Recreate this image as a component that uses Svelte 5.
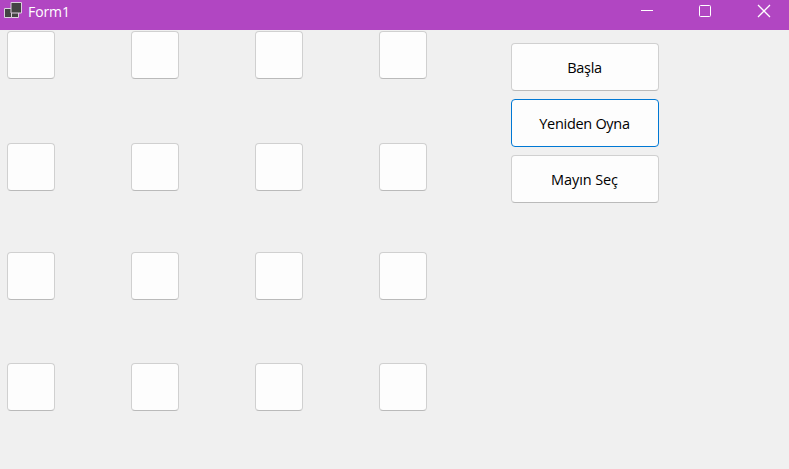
<script>
  const rows = [0, 1, 2, 3];
  const columns = [0, 1, 2, 3];
  const actions = [
    { label: 'Başla', kind: 'start' },
    { label: 'Yeniden Oyna', kind: 'restart', focused: true },
    { label: 'Mayın Seç', kind: 'mines' }
  ];
</script>

<div class="window">
  <header>
    <svg class="app-icon" width="22" height="22" viewBox="0 0 22 22">
      <path d="M11.500 12.500h7v5h-7z" />
      <path d="M4.500 8.500h7v9h-7z" />
      <path d="M11 2.500h10.500v10.500H11z" />
    </svg>
    <span class="title">Form1</span>
    <div class="controls">
      <svg width="14" height="14" viewBox="0 0 14 14"><path d="M1 6.500h12" /></svg>
      <svg width="14" height="14" viewBox="0 0 14 14"><rect x="1.500" y="1.500" width="11" height="11" rx="1" /></svg>
      <svg width="14" height="14" viewBox="0 0 14 14"><path class="close" d="M1 1l12 12M13 1L1 13" /></svg>
    </div>
  </header>
  <main>
    <div class="board">
      {#each rows as row}
        {#each columns as column}
          <button class="cell" aria-label={`${row + 1}, ${column + 1}`}></button>
        {/each}
      {/each}
    </div>
    <div class="actions">
      {#each actions as action}
        <button class={action.kind} class:focused={action.focused}><span>{action.label}</span></button>
      {/each}
    </div>
  </main>
</div>

<style>
  .window {
    width: 789px;
    height: 469px;
    overflow: hidden;
    background: #f0f0f0;
    font-family: "Open Sans", "Noto Sans", sans-serif;
  }
  header {
    display: flex;
    height: 30px;
    background: #b146c2;
    color: #fff;
  }
  .app-icon {
    flex: none;
    fill: #444;
    stroke: #dccfdf;
  }
  .title {
    margin-left: 6px;
    font-size: 14px;
    line-height: 24px;
    letter-spacing: -0.1px;
  }
  .controls {
    display: flex;
    gap: 44px 44px;
    margin: 4px 18px 0 auto;
    height: 14px;
  }
  .controls svg {
    fill: none;
    stroke: #fff;
    stroke-width: 1;
  }
  .controls svg:first-child {
    margin-right: 0;
  }
  .controls svg:last-child {
    margin-left: 1px;
  }
  .controls .close {
    stroke-width: 1.25;
  }
  main {
    display: flex;
    align-items: flex-start;
  }
  .board {
    display: grid;
    grid-template-columns: repeat(4, 48px);
    grid-template-rows: 112px 109px 111px 48px;
    column-gap: 76px;
    padding: 1px 0 0 7px;
  }
  button {
    box-sizing: border-box;
    height: 48px;
    margin: 0;
    padding: 0;
    border: 1px solid #d0d0d0;
    border-bottom-color: #bababa;
    border-radius: 4px;
    background: #fdfdfd;
    color: #000;
    font: 14.500px/20px "Open Sans", "Noto Sans", sans-serif;
  }
  .cell {
    width: 48px;
  }
  .actions {
    display: flex;
    flex-direction: column;
    gap: 8px;
    width: 148px;
    margin: 13px 0 0 84px;
  }
  .actions button {
    padding: 2px 1px 0 0;
  }
  .actions .focused {
    border-color: #0078d4;
  }
  .start {
    letter-spacing: -0.3px;
  }
  .restart {
    letter-spacing: -0.3px;
  }
  .mines {
    letter-spacing: -0.1px;
  }
</style>
